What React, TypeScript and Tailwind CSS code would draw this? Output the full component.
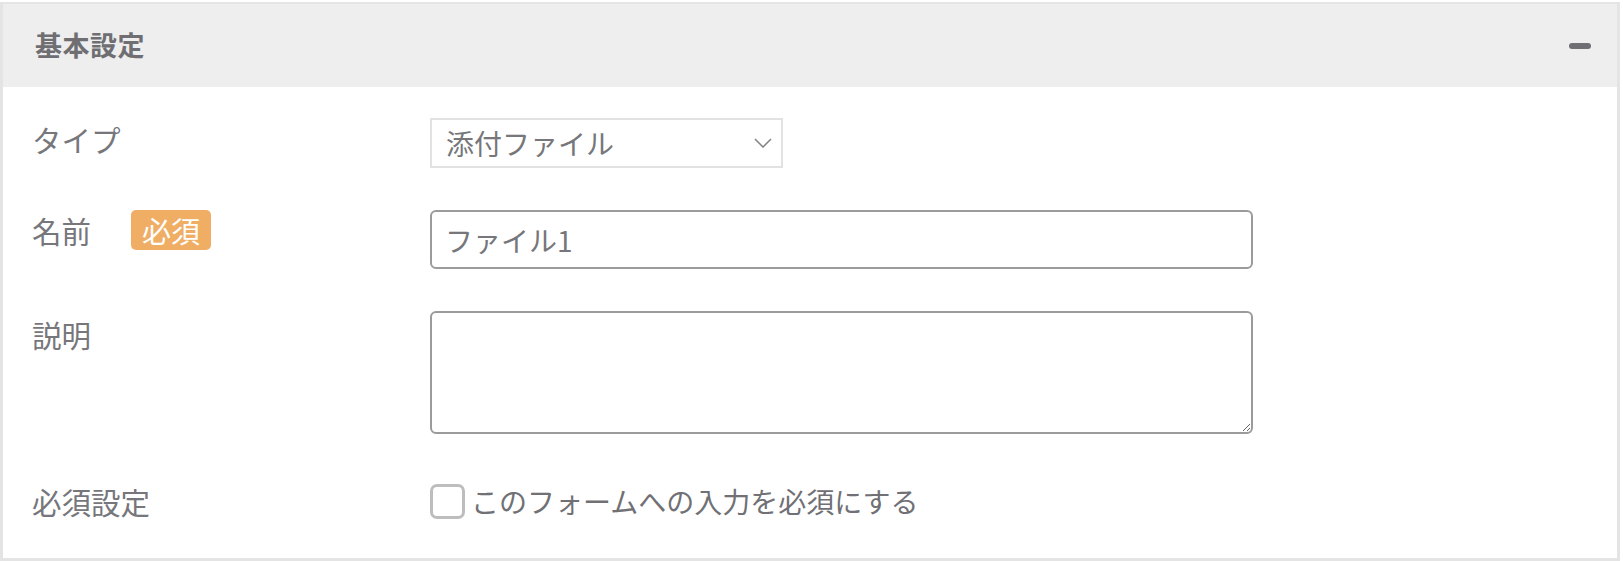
import React from "react";

const font = { fontFamily: '"Noto Sans CJK JP", "Noto Sans", sans-serif' };

function Label({ children }: { children: React.ReactNode }) {
  return <div className="text-[29.5px] leading-[42px] text-[#76767b]">{children}</div>;
}

export default function App() {
  return (
    <div className="bg-white w-[1623px] h-[561px] overflow-hidden" style={font}>
      <div className="mt-[2px] w-[1620px] border-x-[3px] border-t-[2px] border-b-[4px] border-[#e4e4e4]">
        {/* header */}
        <div className="h-[83px] bg-[#eeeeee] flex items-center justify-between pl-[32px] pr-[26px]">
          <h2 className="text-[27px] font-bold text-[#6f6f73] tracking-[0.5px]">基本設定</h2>
          <span className="block w-[22px] h-[6px] rounded-full bg-[#6f6f73]" />
        </div>

        {/* body */}
        <div className="pl-[29px] pt-[31px] pb-[36px] flex flex-col">
          <div className="flex items-start">
            <div className="w-[398px]">
              <Label>タイプ</Label>
            </div>
            <div className="w-[353px] h-[50px] border-2 border-[#e2e2e2] flex items-center justify-between pl-[14px] pr-[9px]">
              <span className="text-[28px] text-[#76767b]">添付ファイル</span>
              <svg width="18" height="10" viewBox="0 0 18 10" fill="none">
                <path d="M1 1l8 8 8-8" stroke="#858589" strokeWidth="1.6" />
              </svg>
            </div>
          </div>

          <div className="flex items-start mt-[42px]">
            <div className="w-[398px] flex items-center gap-[40px] -mt-[1px]">
              <Label>名前</Label>
              <span className="h-[40px] px-[11px] rounded-[5px] bg-[#efae63] text-white text-[29px] leading-[40px]">
                必須
              </span>
            </div>
            <input
              readOnly
              value="ファイル1"
              className="w-[823px] h-[59px] border-2 border-[#9b9b9b] rounded-[6px] px-[13px] text-[28px] text-[#76767b] outline-none"
              style={font}
            />
          </div>

          <div className="flex items-start mt-[42px]">
            <div className="w-[398px] pt-[2px]">
              <Label>説明</Label>
            </div>
            <textarea
              readOnly
              className="w-[823px] h-[123px] border-2 border-[#9b9b9b] rounded-[6px] px-[13px] text-[28px] text-[#76767b] outline-none"
              style={font}
            />
          </div>

          <div className="flex items-center mt-[46px]">
            <div className="w-[398px]">
              <Label>必須設定</Label>
            </div>
            <label className="flex items-center gap-[6px]">
              <span className="block w-[35px] h-[35px] border-[3px] border-[#bdbdbd] rounded-[7px]" />
              <span className="text-[28px] leading-[42px] text-[#707075]">このフォームへの入力を必須にする</span>
            </label>
          </div>
        </div>
      </div>
    </div>
  );
}
